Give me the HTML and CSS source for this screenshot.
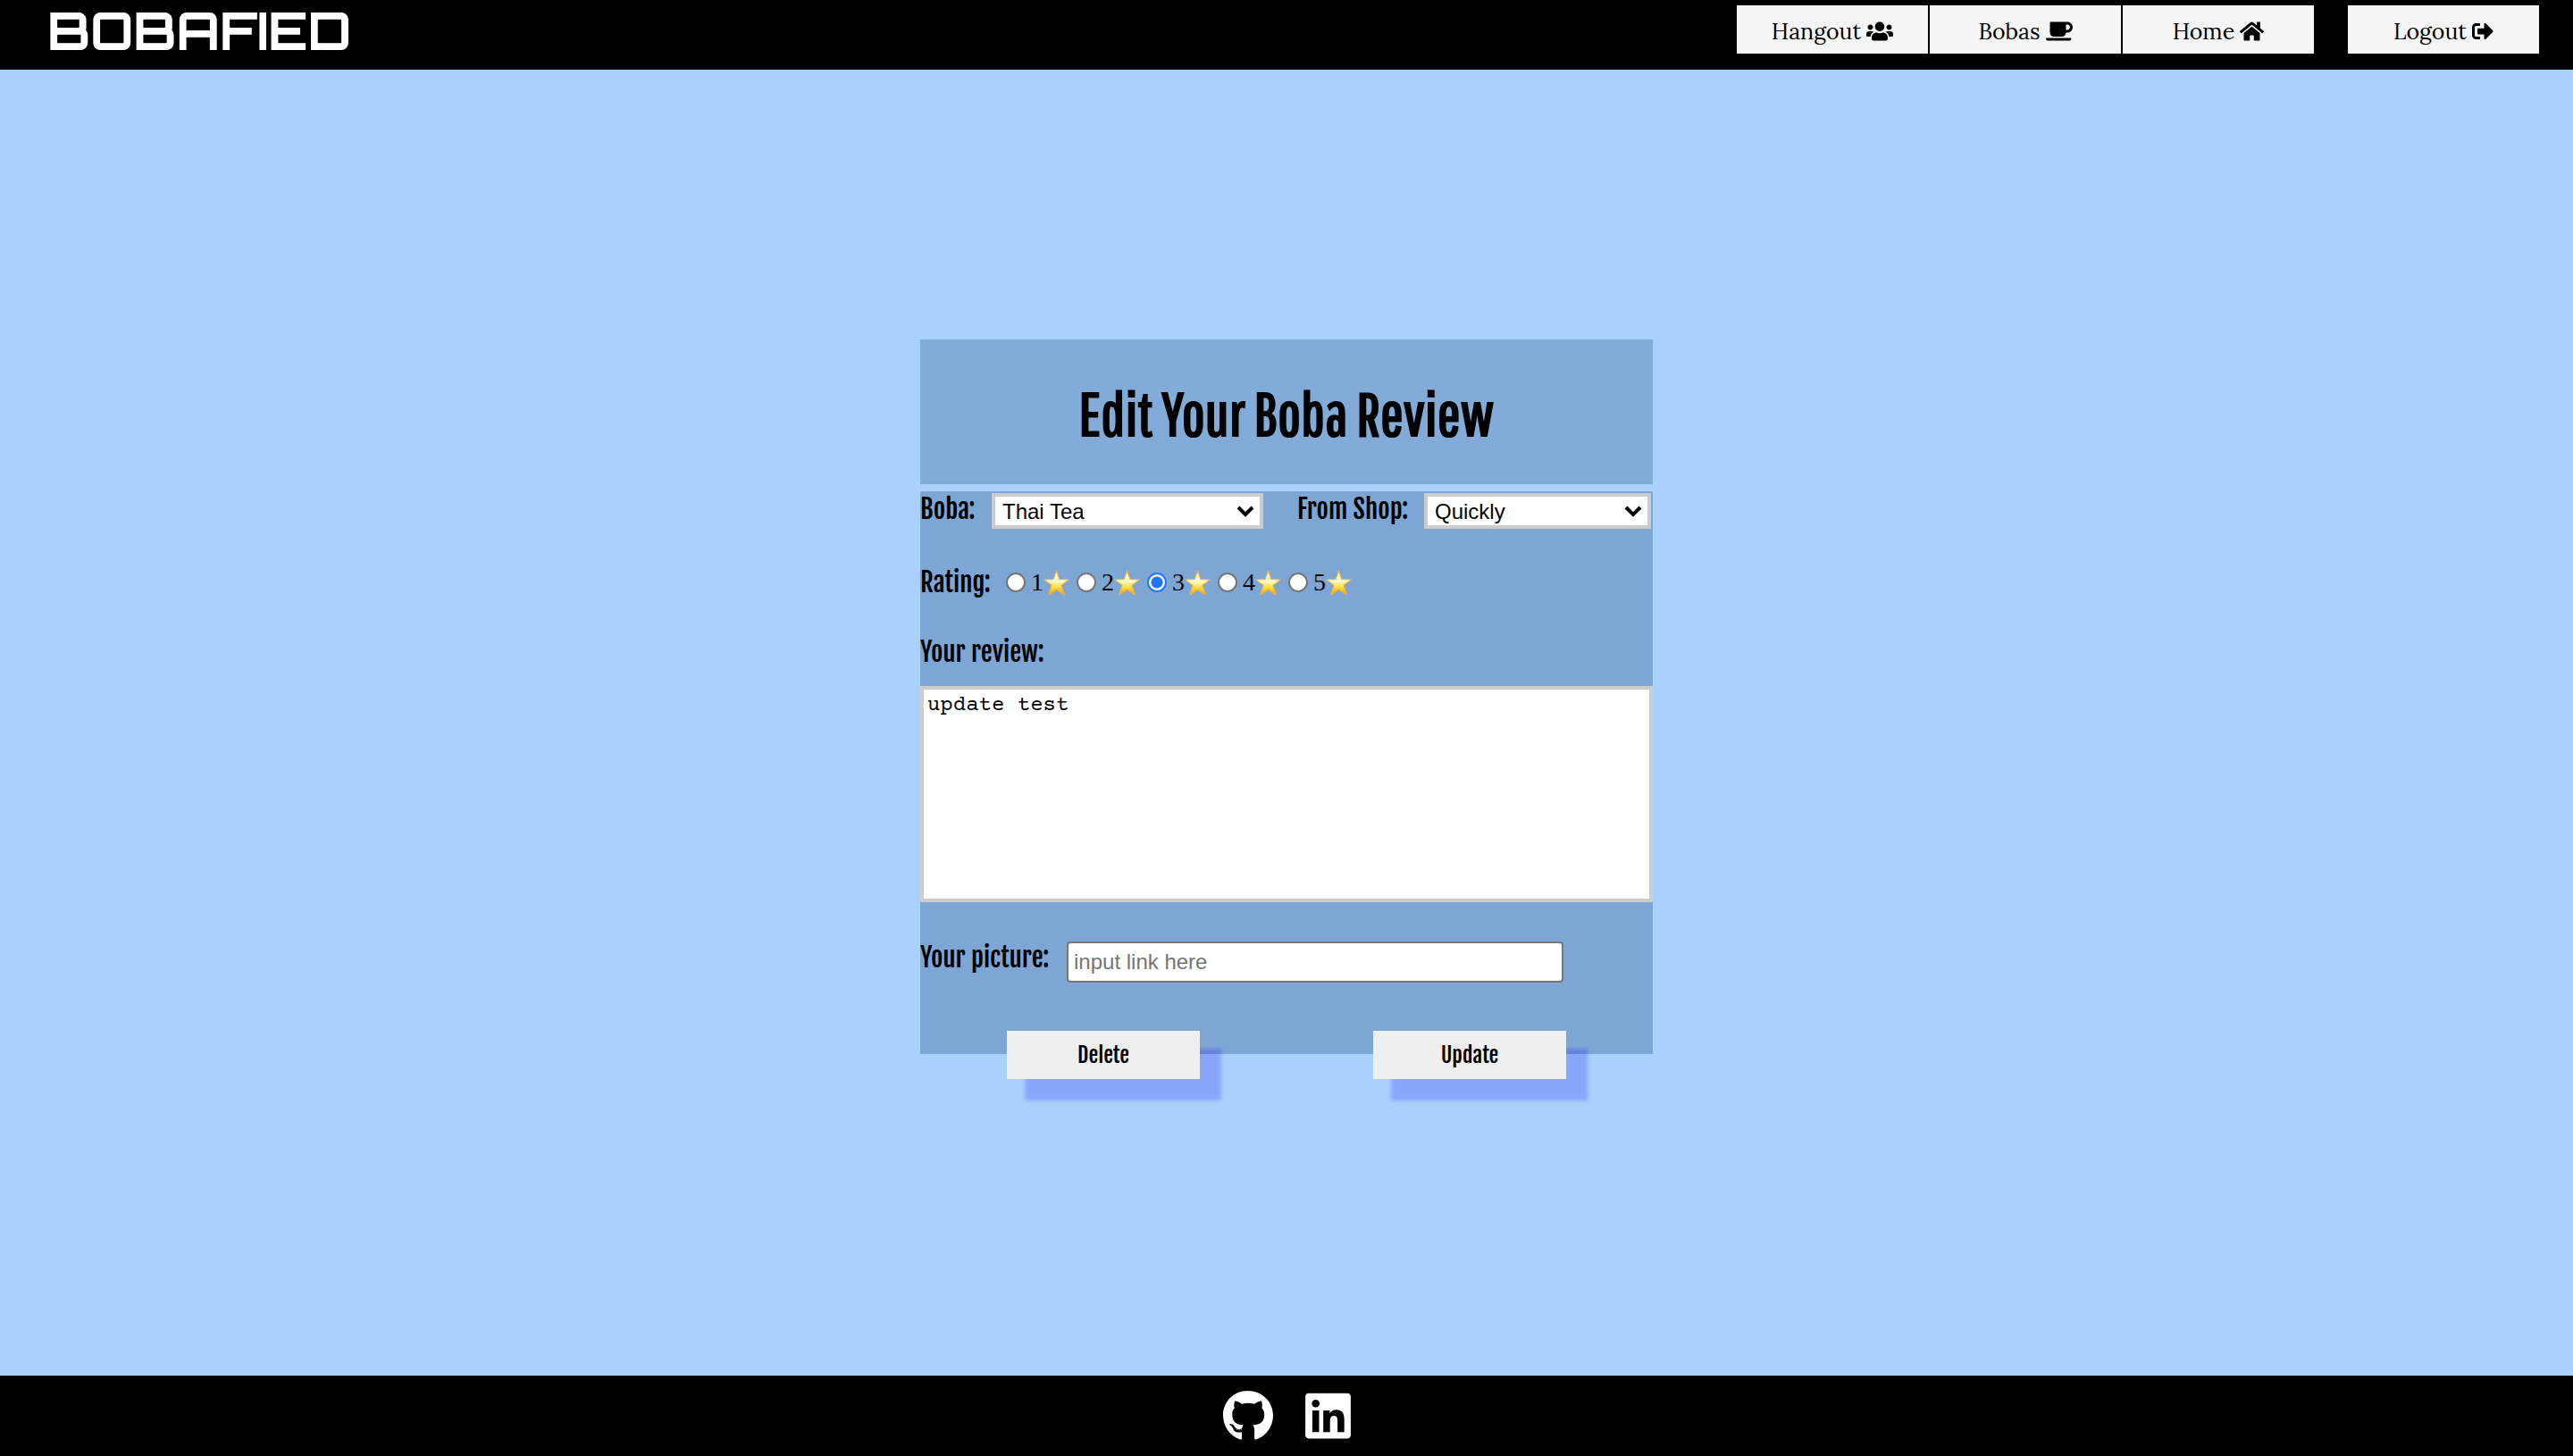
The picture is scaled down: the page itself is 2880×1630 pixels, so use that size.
FILE: index.html
```html
<!DOCTYPE html>
<html lang="en">
<head>
<meta charset="utf-8">
<title>Bobafied</title>
<link rel="stylesheet" href="styles.css">
</head>
<body>
<header class="header">
  <a class="logo" href="#">BOBAFIED</a>
  <nav class="nav">
    <a class="nav-link" href="#">Hangout <svg class="nav-icon nav-icon-wide" viewBox="0 0 640 512"><path d="M96 224c35.300 0 64-28.700 64-64s-28.700-64-64-64-64 28.700-64 64 28.700 64 64 64zm448 0c35.300 0 64-28.700 64-64s-28.700-64-64-64-64 28.700-64 64 28.700 64 64 64zm32 32h-64c-17.600 0-33.500 7.100-45.100 18.600 40.300 22.100 68.900 62 75.100 109.400h66c17.700 0 32-14.300 32-32v-32c0-35.300-28.700-64-64-64zm-256 0c61.900 0 112-50.100 112-112S381.900 32 320 32 208 82.100 208 144s50.100 112 112 112zm76.800 32h-8.300c-20.800 10-43.900 16-68.500 16s-47.600-6-68.500-16h-8.300C179.600 288 128 339.600 128 403.200V432c0 26.500 21.500 48 48 48h288c26.500 0 48-21.500 48-48v-28.800c0-63.600-51.600-115.200-115.200-115.200zm-223.700-13.400C161.500 263.100 145.600 256 128 256H64c-35.300 0-64 28.700-64 64v32c0 17.700 14.300 32 32 32h65.900c6.300-47.400 34.900-87.300 75.200-109.400z"/></svg></a>
    <a class="nav-link" href="#">Bobas <svg class="nav-icon nav-icon-wide" viewBox="0 0 640 512"><path d="M192 384h192c53 0 96-43 96-96h32c70.600 0 128-57.400 128-128S582.600 32 512 32H120c-13.300 0-24 10.700-24 24v232c0 53 43 96 96 96zM512 96c35.300 0 64 28.700 64 64s-28.700 64-64 64h-32V96h32zm47.700 384H48.300c-47.600 0-61-64-36-64h583.300c25 0 11.800 64-35.900 64z"/></svg></a>
    <a class="nav-link" href="#">Home <svg class="nav-icon nav-icon-home" viewBox="0 0 576 512"><path d="M280.370 148.260L96 300.110V464a16 16 0 0 0 16 16l112.060-.29a16 16 0 0 0 15.920-16V368a16 16 0 0 1 16-16h64a16 16 0 0 1 16 16v95.640a16 16 0 0 0 16 16.050L464 480a16 16 0 0 0 16-16V300L295.670 148.260a12.190 12.190 0 0 0-15.300 0zM571.600 251.470L488 182.560V44.050a12 12 0 0 0-12-12h-56a12 12 0 0 0-12 12v72.610L318.470 43a48 48 0 0 0-61 0L4.340 251.470a12 12 0 0 0-1.600 16.900l25.500 31A12 12 0 0 0 45.150 301l235.220-193.740a12.190 12.190 0 0 1 15.300 0L530.900 301a12 12 0 0 0 16.900-1.600l25.500-31a12 12 0 0 0-1.700-16.930z"/></svg></a>
    <a class="nav-link nav-logout" href="#">Logout <svg class="nav-icon" viewBox="0 0 512 512"><path d="M497 273L329 441c-15 15-41 4.500-41-17v-96H152c-13.300 0-24-10.700-24-24v-96c0-13.300 10.700-24 24-24h136V88c0-21.400 25.900-32 41-17l168 168c9.300 9.400 9.300 24.600 0 34zM192 436v-40c0-6.600-5.400-12-12-12H96c-17.700 0-32-14.300-32-32V160c0-17.700 14.300-32 32-32h84c6.600 0 12-5.400 12-12V76c0-6.600-5.400-12-12-12H96c-53 0-96 43-96 96v192c0 53 43 96 96 96h84c6.600 0 12-5.400 12-12z"/></svg></a>
  </nav>
</header>

<main class="main">
  <svg class="defs" width="0" height="0" aria-hidden="true">
    <defs>
      <linearGradient id="gold" x1="0" y1="0" x2="0" y2="1">
        <stop offset="0" stop-color="#fff6d0"/>
        <stop offset="0.45" stop-color="#fff9c4"/>
        <stop offset="0.7" stop-color="#fddc3c"/>
        <stop offset="1" stop-color="#f39a12"/>
      </linearGradient>
      <symbol id="star" viewBox="0 0 28 28">
        <path d="M14 1L17.200 10.200L27.500 10.500L19.200 16.500L22.600 27L14 21.200L5.400 27L8.800 16.500L0.500 10.500L10.800 10.200Z" fill="url(#gold)" stroke="#f2b23a" stroke-width="1" stroke-linejoin="round"/>
      </symbol>
    </defs>
  </svg>
  <section class="panel">
    <div class="title-box"><h1 class="title">Edit Your Boba Review</h1></div>
    <form class="form">
      <div class="row row-selects">
        <label class="label" for="boba">Boba:</label>
        <select class="select select-boba" id="boba"><option>Thai Tea</option></select>
        <label class="label label-shop" for="shop">From Shop:</label>
        <select class="select select-shop" id="shop"><option>Quickly</option></select>
      </div>
      <div class="row row-rating" role="radiogroup" aria-labelledby="rating-label">
        <span class="label" id="rating-label">Rating:</span>
        <div class="ratings">
          <label class="rating"><input class="radio" type="radio" name="rating" value="1"><span class="score">1<svg class="star"><use href="#star"/></svg></span></label>
          <label class="rating"><input class="radio" type="radio" name="rating" value="2"><span class="score">2<svg class="star"><use href="#star"/></svg></span></label>
          <label class="rating"><input class="radio" type="radio" name="rating" value="3" checked><span class="score">3<svg class="star"><use href="#star"/></svg></span></label>
          <label class="rating"><input class="radio" type="radio" name="rating" value="4"><span class="score">4<svg class="star"><use href="#star"/></svg></span></label>
          <label class="rating"><input class="radio" type="radio" name="rating" value="5"><span class="score">5<svg class="star"><use href="#star"/></svg></span></label>
        </div>
      </div>
      <div class="row row-review">
        <label class="label" for="review">Your review:</label>
      </div>
      <textarea class="review" id="review">update test</textarea>
      <div class="row row-picture">
        <label class="label" for="picture">Your picture:</label>
        <input class="picture" id="picture" type="text" placeholder="input link here">
      </div>
      <div class="actions">
        <button class="button" type="button">Delete</button>
        <button class="button" type="submit">Update</button>
      </div>
    </form>
  </section>
</main>

<footer class="footer">
  <a class="social" href="#" aria-label="GitHub"><svg class="social-icon social-github" viewBox="0 0 496 512"><path d="M165.900 397.400c0 2-2.300 3.600-5.200 3.600-3.300.3-5.600-1.300-5.600-3.600 0-2 2.300-3.600 5.200-3.600 3-.3 5.600 1.300 5.600 3.600zm-31.100-4.500c-.7 2 1.300 4.300 4.300 4.900 2.600 1 5.600 0 6.200-2s-1.300-4.300-4.300-5.200c-2.600-.7-5.500.3-6.200 2.300zm44.200-1.700c-2.900.7-4.900 2.600-4.600 4.900.3 2 2.900 3.300 5.900 2.600 2.900-.7 4.900-2.600 4.600-4.600-.3-1.900-3-3.200-5.900-2.900zM244.800 8C106.100 8 0 113.300 0 252c0 110.900 69.800 205.800 169.500 239.200 12.800 2.300 17.300-5.600 17.300-12.100 0-6.200-.3-40.400-.3-61.400 0 0-70 15-84.700-29.800 0 0-11.400-29.100-27.800-36.600 0 0-22.900-15.700 1.600-15.400 0 0 24.900 2 38.600 25.800 21.900 38.600 58.600 27.500 72.900 20.900 2.300-16 8.800-27.100 16-33.700-55.900-6.200-112.300-14.300-112.300-110.500 0-27.500 7.600-41.300 23.600-58.900-2.600-6.500-11.100-33.300 2.600-67.900 20.900-6.500 69 27 69 27 20-5.600 41.500-8.500 62.800-8.500s42.800 2.900 62.800 8.500c0 0 48.100-33.600 69-27 13.700 34.700 5.200 61.400 2.600 67.900 16 17.700 25.800 31.500 25.800 58.900 0 96.500-58.900 104.200-114.800 110.500 9.200 7.900 17 22.900 17 46.400 0 33.700-.3 75.400-.3 83.600 0 6.500 4.600 14.400 17.300 12.100C428.200 457.800 496 362.900 496 252 496 113.300 383.500 8 244.800 8z"/></svg></a>
  <a class="social" href="#" aria-label="LinkedIn"><svg class="social-icon social-linkedin" viewBox="0 0 448 512"><path d="M416 32H31.900C14.300 32 0 46.500 0 64.300v383.400C0 465.500 14.300 480 31.900 480H416c17.600 0 32-14.500 32-32.300V64.300c0-17.800-14.400-32.300-32-32.300zM135.400 416H69V202.200h66.500V416zm-33.200-243c-21.300 0-38.500-17.300-38.500-38.500S80.900 96 102.200 96c21.200 0 38.500 17.300 38.500 38.500 0 21.300-17.200 38.500-38.500 38.500zm282.100 243h-66.400V312c0-24.800-.5-56.700-34.500-56.700-34.600 0-39.900 27-39.900 54.900V416h-66.400V202.200h63.700v29.200h.9c8.900-16.800 30.600-34.500 62.900-34.500 67.200 0 79.700 44.300 79.700 101.900V416z"/></svg></a>
</footer>
</body>
</html>
```
FILE: styles.css
```css
* { box-sizing: border-box; }

body {
  margin: 0;
  min-height: 100vh;
  display: flex;
  flex-direction: column;
  background: #aad1fb;
  color: #000;
  font-family: "Liberation Serif", "Times New Roman", serif;
  font-size: 28px;
}

.header {
  display: flex;
  justify-content: space-between;
  align-items: flex-start;
  height: 78px;
  padding: 6px 38px 0 53px;
  background: #000;
}

.logo {
  font-family: "Orbitron", "DejaVu Sans", sans-serif;
  font-weight: 700;
  font-size: 58px;
  line-height: 56px;
  color: #fff;
  text-decoration: none;
}

.nav { display: flex; gap: 2px; }

.nav-link {
  display: flex;
  justify-content: center;
  align-items: center;
  gap: 6px;
  width: 214px;
  height: 54px;
  padding-top: 4px;
  background: #f5f5f5;
  color: #000;
  font-family: "Lora", "Liberation Serif", serif;
  font-size: 25px;
  line-height: 32px;
  text-decoration: none;
}

.nav-logout { margin-left: 36px; }

.nav-icon { width: 24px; height: 24px; }
.nav-icon-wide { width: 30px; }
.nav-icon-home { width: 27px; }

.main {
  flex: 1;
  display: flex;
  justify-content: center;
  align-items: center;
  padding-bottom: 58px;
}

.defs { position: absolute; }

.panel {
  display: flex;
  flex-direction: column;
  gap: 8px;
  width: 820px;
}

.title-box {
  display: flex;
  justify-content: center;
  padding: 42px 0 40px;
  background: #82abd8;
}

.title {
  margin: 0;
  font-family: "Pathway Gothic One", "Fjalla One", "Liberation Sans Narrow", sans-serif;
  font-weight: 700;
  font-size: 69px;
  line-height: 80px;
}

.form {
  height: 630px;
  background: #7ea6d5;
}

.row { display: flex; align-items: flex-start; }

.row-selects { padding-top: 2px; }
.row-rating { padding-top: 40px; align-items: center; }
.row-review { padding-top: 40px; }
.row-picture { padding-top: 44px; }

.label {
  font-family: "Fjalla One", "Liberation Sans Narrow", "Liberation Sans", sans-serif;
  font-weight: 400;
  font-size: 29px;
  line-height: 36px;
}

.row-selects .label:first-child { width: 80px; }
.row-picture .label { width: 164px; }
.row-rating .label { width: 96px; }
.label-shop { width: 142px; margin-left: 38px; }

.select {
  height: 40px;
  padding: 0 8px;
  border: 4px solid #ccc;
  border-radius: 0;
  appearance: none;
  background: #fff url("data:image/svg+xml,%3Csvg xmlns='http://www.w3.org/2000/svg' viewBox='0 0 20 14'%3E%3Cpath d='M2 3l8 8 8-8' fill='none' stroke='%23000' stroke-width='4'/%3E%3C/svg%3E") no-repeat right 6px center / 20px 14px;
  color: #000;
  font-family: "Liberation Sans", Arial, sans-serif;
  font-size: 24px;
}

.select-boba { width: 304px; }
.select-shop { width: 254px; }

.ratings { display: flex; gap: 8px; height: 40px; align-items: center; }
.rating { display: flex; align-items: center; gap: 6px; }
.score { display: flex; align-items: center; line-height: 32px; }
.star { width: 29px; height: 29px; }

.radio {
  appearance: none;
  width: 22px;
  height: 22px;
  margin: 0;
  border: 2px solid #767676;
  border-radius: 50%;
  background: #fff;
}

.radio:checked {
  border-color: #2575f8;
  background: radial-gradient(circle, #2575f8 6px, #fff 7px);
}

.review {
  display: block;
  width: 100%;
  height: 242px;
  margin-top: 20px;
  padding: 4px;
  border: 4px solid #ccc;
  resize: none;
  font-family: "Courier Prime", "Liberation Mono", "Courier New", monospace;
  font-size: 24px;
}

.picture {
  width: 556px;
  height: 46px;
  padding: 0 6px;
  border: 2px solid #767676;
  border-radius: 4px;
  font-family: "Liberation Sans", Arial, sans-serif;
  font-size: 24px;
}

.picture::placeholder { color: #757575; }

.actions {
  display: grid;
  grid-template-columns: 1fr 1fr;
  justify-items: center;
  padding-top: 54px;
}

.button {
  width: 216px;
  height: 54px;
  border: 0;
  background: #efefef;
  box-shadow: 22px 22px 4px 2px rgba(0, 0, 255, 0.2);
  color: #000;
  font-family: "Fjalla One", "Liberation Sans Narrow", "Liberation Sans", sans-serif;
  font-weight: 400;
  font-size: 24px;
}

.footer {
  display: flex;
  justify-content: center;
  align-items: center;
  gap: 36px;
  height: 90px;
  background: #000;
}

.social { display: flex; }
.social-icon { height: 58px; fill: #fff; }
.social-github { width: 56px; }
.social-linkedin { width: 51px; }
```
